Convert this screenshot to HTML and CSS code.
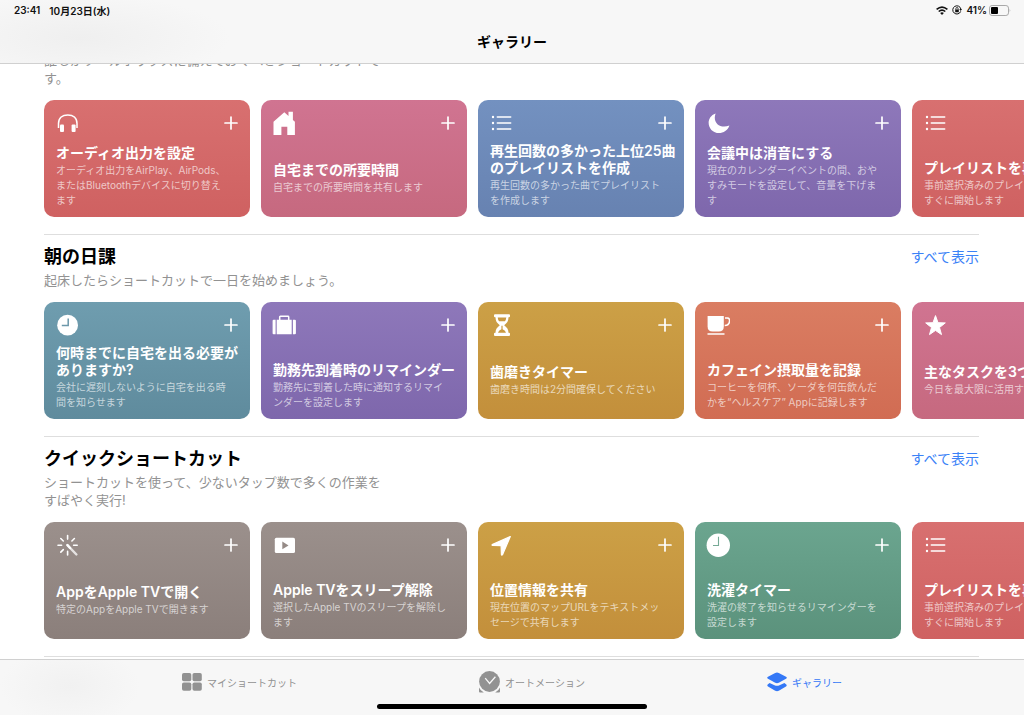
FILE: index.html
```html
<!DOCTYPE html>
<html lang="ja">
<head>
<meta charset="utf-8">
<meta name="viewport" content="width=device-width, initial-scale=1">
<title>ギャラリー</title>
<link rel="stylesheet" href="styles.css">
</head>
<body>
<svg class="defs" aria-hidden="true">
  <symbol id="plus" viewBox="0 0 14 14"><path d="M7 1v12M1 7h12" fill="none" stroke="#fff" stroke-width="1.7" stroke-linecap="round"/></symbol>
  <symbol id="list" viewBox="0 0 24 24"><path d="M8.3 6h13.4M8.3 12h13.4M8.3 18h13.4" fill="none" stroke="#fff" stroke-width="1.5" stroke-linecap="round"/><g fill="#fff"><circle cx="4" cy="6" r="1.2"/><circle cx="4" cy="12" r="1.2"/><circle cx="4" cy="18" r="1.2"/></g></symbol>
</svg>
<div class="app">
  <header class="topbar">
    <div class="status">
      <div class="status-group"><span>23:41</span><span>10月23日(水)</span></div>
      <div class="status-group status-right">
        <svg width="12" height="9" viewBox="0 0 12 9" aria-hidden="true"><g fill="none" stroke="#111" stroke-width="1.6"><path d="M.6 3.4Q6-1.2 11.4 3.4"/><path d="M2.7 5.5Q6 2.7 9.3 5.5"/></g><path d="M4.1 6.9Q6 5.4 7.9 6.9L6 8.9z" fill="#111"/></svg>
        <svg width="10" height="10" viewBox="0 0 10 10" aria-hidden="true"><g fill="none" stroke="#111"><path d="M8.7 6.4A4.1 4.1 0 1 1 8.9 4.1"/><path d="M3.9 4.7V3.6a1.1 1.1 0 0 1 2.2 0v1.1" stroke-width=".8"/></g><path d="M3.2 4.5h3.6v2.7H3.2zM7.3 4.1H10L8.7 6z" fill="#111"/></svg>
        <span>41%</span>
        <svg class="battery" width="22" height="11" viewBox="0 0 22 11" aria-hidden="true"><rect x=".5" y=".5" width="19" height="10" rx="2.6" fill="none" stroke="#a9a9a9"/><rect x="2" y="2" width="7" height="7" rx="1" fill="#000"/><path d="M20.7 3.8q1.2 1.7 0 3.4z" fill="#a9a9a9"/></svg>
      </div>
    </div>
    <h1 class="page-title">ギャラリー</h1>
  </header>

  <main class="gallery">
    <section class="section section-scrolled">
      <p class="section-text">誰もがツールボックスに備えておくべきショートカットです。</p>
      <div class="cards">
        <article class="card red">
          <div class="card-head">
            <svg class="icon" viewBox="0 0 24 24" aria-hidden="true"><path d="M3.5 17V12.6C3.5 7 7.4 3.9 12.8 3.9S22 7 22 12.6V17" fill="none" stroke="#fff" stroke-width="1.5"/><rect x="5" y="13.4" width="4" height="7.6" rx="1" fill="#fff"/><rect x="16.6" y="13.4" width="4" height="7.6" rx="1" fill="#fff"/></svg>
            <button class="add" type="button" aria-label="追加"><svg><use href="#plus"/></svg></button>
          </div>
          <h3>オーディオ出力を設定</h3>
          <p>オーディオ出力をAirPlay、AirPods、<br>またはBluetoothデバイスに切り替え<br>ます</p>
        </article>
        <article class="card pink">
          <div class="card-head">
            <svg class="icon" viewBox="0 0 24 24" aria-hidden="true"><path d="M1.5 10.8 12.3 1.2l4.2 3.7V.7h4.4v8.2l2 1.9V24h-7.6v-8.3H9.4V24H1.5z" fill="#fff"/></svg>
            <button class="add" type="button" aria-label="追加"><svg><use href="#plus"/></svg></button>
          </div>
          <h3>自宅までの所要時間</h3>
          <p>自宅までの所要時間を共有します</p>
        </article>
        <article class="card blue">
          <div class="card-head">
            <svg class="icon" aria-hidden="true"><use href="#list"/></svg>
            <button class="add" type="button" aria-label="追加"><svg><use href="#plus"/></svg></button>
          </div>
          <h3>再生回数の多かった上位25曲<br>のプレイリストを作成</h3>
          <p>再生回数の多かった曲でプレイリスト<br>を作成します</p>
        </article>
        <article class="card purple">
          <div class="card-head">
            <svg class="icon" viewBox="0 0 24 24" aria-hidden="true"><path d="M9.6 2.4C1.8 5 .8 14 5.4 19c5.600 5.600 15.600 3.200 18-4.500C14 18.200 6.200 11.600 9.600 2.400z" fill="#fff"/></svg>
            <button class="add" type="button" aria-label="追加"><svg><use href="#plus"/></svg></button>
          </div>
          <h3>会議中は消音にする</h3>
          <p>現在のカレンダーイベントの間、おや<br>すみモードを設定して、音量を下げま<br>す</p>
        </article>
        <article class="card red">
          <div class="card-head">
            <svg class="icon" aria-hidden="true"><use href="#list"/></svg>
            <button class="add" type="button" aria-label="追加"><svg><use href="#plus"/></svg></button>
          </div>
          <h3>プレイリストを再生</h3>
          <p>事前選択済みのプレイリストを<br>すぐに開始します</p>
        </article>
      </div>
    </section>

    <section class="section">
      <div class="section-head"><h2>朝の日課</h2><a href="#morning">すべて表示</a></div>
      <p class="section-text">起床したらショートカットで一日を始めましょう。</p>
      <div class="cards">
        <article class="card teal">
          <div class="card-head">
            <svg class="icon" viewBox="0 0 24 24" aria-hidden="true"><circle cx="12.6" cy="12.2" r="10.4" fill="#fff"/><path d="M13.2 5.400v7.200H6.800" fill="none" stroke="#6c98aa" stroke-width="1.500"/></svg>
            <button class="add" type="button" aria-label="追加"><svg><use href="#plus"/></svg></button>
          </div>
          <h3>何時までに自宅を出る必要が<br>ありますか?</h3>
          <p>会社に遅刻しないように自宅を出る時<br>間を知らせます</p>
        </article>
        <article class="card purple">
          <div class="card-head">
            <svg class="icon" viewBox="0 0 24 24" aria-hidden="true"><path d="M.6 7.700q0-1 1-1h2v14.500h-2q-1 0-1-1zM4.700 6.700h15v14.500h-15zM20.900 6.700h2q1 0 1 1v12.500q0 1-1 1h-2z" fill="#fff"/><path d="M7.700 7V4q0-.7.7-.7h7.600q.7 0 .7.7v3" fill="none" stroke="#fff" stroke-width="1.500"/></svg>
            <button class="add" type="button" aria-label="追加"><svg><use href="#plus"/></svg></button>
          </div>
          <h3>勤務先到着時のリマインダー</h3>
          <p>勤務先に到着した時に通知するリマイ<br>ンダーを設定します</p>
        </article>
        <article class="card gold">
          <div class="card-head">
            <svg class="icon" viewBox="0 0 24 24" aria-hidden="true"><path d="M6 1.300h14q1 0 1 1v1q0 1-1 1h-.5c0 4-1.500 5.700-4.300 8 2.800 2.300 4.300 4 4.300 7.500h.5q1 0 1 1v1.200q0 1-1 1H6q-1 0-1-1v-1.200q0-1 1-1h.5c0-3.500 1.500-5.200 4.300-7.500-2.800-2.300-4.300-4-4.300-8H6q-1 0-1-1v-1q0-1 1-1z" fill="#fff"/><path d="M8.700 4.500h8.600q-.2 2.200-1.400 3.700H10.100Q8.900 6.700 8.700 4.500zM12.400 12.800h1.200v3.400q2.900 1.300 3.400 3.600H9q.5-2.300 3.400-3.600z" fill="#ca9a42"/></svg>
            <button class="add" type="button" aria-label="追加"><svg><use href="#plus"/></svg></button>
          </div>
          <h3>歯磨きタイマー</h3>
          <p>歯磨き時間は2分間確保してください</p>
        </article>
        <article class="card orange">
          <div class="card-head">
            <svg class="icon" viewBox="0 0 24 24" aria-hidden="true"><path d="M1.600 3h16.200v10.500q0 5-5 5H6.600q-5 0-5-5z" fill="#fff"/><path d="M19 5h2.300q2.300 0 2.300 2.600 0 4.700-4.900 5" fill="none" stroke="#fff" stroke-width="1.500"/><path d="M1.500 21h17" stroke="#fff" stroke-width="1.500"/></svg>
            <button class="add" type="button" aria-label="追加"><svg><use href="#plus"/></svg></button>
          </div>
          <h3>カフェイン摂取量を記録</h3>
          <p>コーヒーを何杯、ソーダを何缶飲んだ<br>かを“ヘルスケア” Appに記録します</p>
        </article>
        <article class="card pink">
          <div class="card-head">
            <svg class="icon" viewBox="0 0 24 24" aria-hidden="true"><path d="M12.500 2.600l2.500 7.100 7.300.2-5.800 4.600 2 7.100-6-4.200-6 4.200 2-7.100L2.700 9.900l7.300-.2z" fill="#fff" stroke="#fff" stroke-linejoin="round"/></svg>
            <button class="add" type="button" aria-label="追加"><svg><use href="#plus"/></svg></button>
          </div>
          <h3>主なタスクを3つ選択</h3>
          <p>今日を最大限に活用する</p>
        </article>
      </div>
    </section>

    <section class="section">
      <div class="section-head"><h2>クイックショートカット</h2><a href="#quick">すべて表示</a></div>
      <p class="section-text">ショートカットを使って、少ないタップ数で多くの作業をすばやく実行!</p>
      <div class="cards">
        <article class="card taupe">
          <div class="card-head">
            <svg class="icon" viewBox="0 0 24 24" aria-hidden="true"><path d="M12.600 2.500v3.600M12.600 18.400V22M3 12.300h3.600M18.600 12.300h3.600M5.800 5.500l2.500 2.500M19.400 5.500l-2.500 2.500M5.800 19.100l2.500-2.500" fill="none" stroke="#fff" stroke-width="1.600" stroke-linecap="round"/><path d="M12.400 12.100l9 9.400" stroke="#fff" stroke-opacity=".75" stroke-width="2.400" stroke-linecap="round"/><path d="M12.400 12.100l2.700 2.800" stroke="#fff" stroke-width="2.200" stroke-linecap="round"/></svg>
            <button class="add" type="button" aria-label="追加"><svg><use href="#plus"/></svg></button>
          </div>
          <h3>AppをApple TVで開く</h3>
          <p>特定のAppをApple TVで開きます</p>
        </article>
        <article class="card taupe">
          <div class="card-head">
            <svg class="icon" viewBox="0 0 24 24" aria-hidden="true"><rect x="2.800" y="4.700" width="20.200" height="15.300" rx="1.600" fill="#fff"/><path d="M10.300 8.600v7.600l6.200-3.800z" fill="#958a86"/></svg>
            <button class="add" type="button" aria-label="追加"><svg><use href="#plus"/></svg></button>
          </div>
          <h3>Apple TVをスリープ解除</h3>
          <p>選択したApple TVのスリープを解除し<br>ます</p>
        </article>
        <article class="card gold">
          <div class="card-head">
            <svg class="icon" viewBox="0 0 24 24" aria-hidden="true"><path d="M21.300 3.500 3.200 11.600q-.5.600.3.800l8.600.2.300 9q.4 1 1.100.1z" fill="#fff" stroke="#fff" stroke-width="1.200" stroke-linejoin="round"/></svg>
            <button class="add" type="button" aria-label="追加"><svg><use href="#plus"/></svg></button>
          </div>
          <h3>位置情報を共有</h3>
          <p>現在位置のマップURLをテキストメッ<br>セージで共有します</p>
        </article>
        <article class="card green">
          <div class="card-head">
            <svg class="icon" viewBox="0 0 24 24" aria-hidden="true"><circle cx="12.300" cy="12.300" r="11.700" fill="#fff"/><path d="M12.500 3.800v8.700H7" fill="none" stroke="#76aa96" stroke-width="1.100"/></svg>
            <button class="add" type="button" aria-label="追加"><svg><use href="#plus"/></svg></button>
          </div>
          <h3>洗濯タイマー</h3>
          <p>洗濯の終了を知らせるリマインダーを<br>設定します</p>
        </article>
        <article class="card red">
          <div class="card-head">
            <svg class="icon" aria-hidden="true"><use href="#list"/></svg>
            <button class="add" type="button" aria-label="追加"><svg><use href="#plus"/></svg></button>
          </div>
          <h3>プレイリストを再生</h3>
          <p>事前選択済みのプレイリストを<br>すぐに開始します</p>
        </article>
      </div>
    </section>
    <hr class="rule">
  </main>

  <footer class="bottombar">
    <nav class="tabs">
      <a class="tab" href="#my">
        <svg width="20" height="18" viewBox="0 0 20 18" aria-hidden="true"><g fill="#929292"><rect width="9.300" height="8.300" rx="1.800"/><rect x="10.500" width="9.300" height="8.300" rx="1.800"/><rect y="9.500" width="9.300" height="8.300" rx="1.800"/><rect x="10.500" y="9.500" width="9.300" height="8.300" rx="1.800"/></g></svg>
        マイショートカット
      </a>
      <a class="tab" href="#automation">
        <svg width="21" height="22" viewBox="0 0 21 22" aria-hidden="true"><circle cx="10.500" cy="10.500" r="10.400" fill="#929292"/><path d="M0 16.500q1.500 3.300 4.800 5.100H1q-1 0-1-1zM21 16.500q-1.500 3.300-4.800 5.100H20q1 0 1-1z" fill="#929292"/><path d="M6.200 7.200l4.400 5.200 5.800-6.600" fill="none" stroke="#f7f7f7" stroke-width="1.300"/></svg>
        オートメーション
      </a>
      <a class="tab active" href="#gallery" aria-current="page">
        <svg width="20" height="20" viewBox="0 0 20 20" aria-hidden="true"><path d="M8.200.9q1.800-.9 3.600 0l7.200 3.900q1.600.9 0 1.900l-7.200 4q-1.800.9-3.600 0L1 6.700q-1.600-1 0-1.900z" fill="#3478f6"/><path d="M2.600 10.900l4.900 2.300q2.500 1.100 5 0l4.900-2.300 1.600 1.300q1.400 1.200 0 2.300l-7.200 4.300q-1.800.9-3.600 0L1 14.500q-1.400-1.100 0-2.300z" fill="#3478f6"/></svg>
        ギャラリー
      </a>
    </nav>
    <div class="home-indicator"></div>
  </footer>
</div>
</body>
</html>
```
FILE: styles.css
```css
* { box-sizing: border-box; }

body {
  margin: 0;
  background: #fff;
  color: #000;
  font-family: Inter, "Noto Sans CJK JP", sans-serif;
}

h1, h2, h3, p { margin: 0; }
svg { display: block; flex: none; }
a { text-decoration: none; }
.defs { position: absolute; width: 0; height: 0; }

.app {
  display: flex;
  flex-direction: column;
  height: 100vh;
}

/* Bars */
.topbar {
  flex: none;
  border-bottom: 1px solid #d0d0d0;
  background:
    radial-gradient(ellipse 150px 44px at 80px 38px, #efefef, transparent),
    #f7f7f7;
}

.status {
  display: flex;
  justify-content: space-between;
  align-items: center;
  height: 20px;
  padding: 0 13px 0 14px;
  font-size: 10px;
  font-weight: 600;
  color: #111;
}

.status-group { display: flex; align-items: center; gap: 9px; }
.status-right { gap: 4px; }
.battery { margin-left: -2px; }

.page-title {
  height: 43px;
  font-size: 14px;
  line-height: 43px;
  font-weight: 700;
  text-align: center;
}

/* Gallery */
.gallery {
  flex: 1;
  min-height: 0;
  overflow: hidden auto;
  scrollbar-width: none;
}

.section { padding-left: 44px; }
.section-scrolled { margin-top: -13px; }

.section-head {
  display: flex;
  justify-content: space-between;
  align-items: center;
  margin-right: 45px;
  padding: 10px 0 2px;
  border-top: 1px solid #dedede;
  line-height: 24px;
}

.section-head h2 { font-size: 18px; font-weight: 700; }
.section-head a { font-size: 14px; line-height: 20px; color: #3b82f7; }

.section-text {
  max-width: 340px;
  font-size: 13px;
  line-height: 18px;
  color: #929292;
}

.cards {
  display: flex;
  gap: 11px;
  padding: 13px 0 17px;
  overflow: hidden;
}

.card {
  display: flex;
  flex-direction: column;
  flex: none;
  width: 206px;
  height: 117px;
  padding: 11px 12px 9px;
  border-radius: 10px;
  color: #fff;
  white-space: nowrap;
}

.card-head {
  display: flex;
  justify-content: space-between;
  align-items: center;
  margin: 0 0 auto -1px;
}

.icon { width: 24px; height: 24px; }

.add {
  padding: 0;
  border: 0;
  background: none;
  cursor: pointer;
}

.add svg { width: 14px; height: 14px; }

.card h3 {
  margin-bottom: 2px;
  font-size: 14px;
  line-height: 17px;
  font-weight: 600;
}

.card p {
  min-height: 28px;
  font-size: 10px;
  line-height: 15px;
  color: rgba(255, 255, 255, 0.65);
}

.red { background: linear-gradient(#d87070, #cf6161); }
.pink { background: linear-gradient(#d07491, #c6697f); }
.blue { background: linear-gradient(#7391c0, #6782b1); }
.purple { background: linear-gradient(#8e78ba, #7e67ac); }
.teal { background: linear-gradient(#6f9daf, #5f8b9d); }
.gold { background: linear-gradient(#cca046, #c38f3b); }
.orange { background: linear-gradient(#da7d62, #d16c53); }
.taupe { background: linear-gradient(#9b908c, #8b7f7b); }
.green { background: linear-gradient(#6ba58f, #5b927c); }

.rule {
  margin: 0 45px 0 44px;
  border: 0;
  border-top: 1px solid #dedede;
}

.bottombar {
  flex: none;
  padding-bottom: 6px;
  border-top: 1px solid #d0d0d0;
  background:
    radial-gradient(ellipse 70px 40px at 70px 26px, #f1f1f1, transparent),
    #f7f7f7;
}

.tabs {
  display: flex;
  justify-content: space-evenly;
  align-items: center;
  height: 44px;
}

.tab {
  display: flex;
  align-items: center;
  gap: 5px;
  font-size: 10px;
  color: #929292;
}

.tab.active { color: #3478f6; }

.home-indicator {
  width: 270px;
  height: 5px;
  margin: 0 auto;
  border-radius: 3px;
  background: #000;
}
```
